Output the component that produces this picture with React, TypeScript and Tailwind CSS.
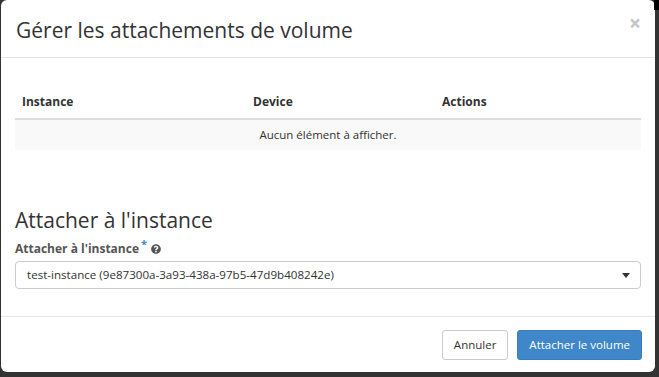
import React from "react";
import { FaQuestionCircle } from "react-icons/fa";

export default function App() {
  return (
    <div className="w-[659px] h-[377px] bg-[#333333] relative overflow-hidden" style={{ fontFamily: '"Open Sans", "Noto Sans", sans-serif' }}>
      <div className="absolute right-0 top-0 w-[5px] h-[10px] bg-black" />
      <div className="ml-[1px] w-[654px] h-[372px] bg-white rounded-[6px] flex flex-col text-[#333]">
        {/* header */}
        <div className="h-[58px] border-b border-[#e5e5e5] flex items-center justify-between pl-[15px] pr-[14px]">
          <h4 className="text-[21px] leading-[22px] text-[#333] pt-[2px]">Gérer les attachements de volume</h4>
          <span className="text-[21px] font-bold leading-none text-[#c5c5c5] -mt-[10px]">×</span>
        </div>
        {/* body */}
        <div className="px-[14px] flex-1 border-b border-[#e5e5e5]">
          <div className="mt-[28px]">
            <div className="flex h-[34px] items-center border-b-2 border-[#dddddd] text-[12px] font-bold">
              <div className="w-[231px] pl-[7px]">Instance</div>
              <div className="w-[189px] pl-[7px]">Device</div>
              <div className="pl-[7px]">Actions</div>
            </div>
            <div className="h-[30px] bg-[#f9f9f9] flex items-center justify-center text-[11.5px] text-[#333]">
              Aucun élément à afficher.
            </div>
          </div>
          <div className="mt-[59px] text-[21px] leading-[22px] text-[#333]">Attacher à l'instance</div>
          <div className="mt-[9px] flex items-center text-[12px] font-bold text-[#555] h-[17px]">
            <span>Attacher à l'instance</span>
            <span className="text-[#3f87c8] ml-[2px] -mt-[8px] text-[11px]">*</span>
            <FaQuestionCircle className="ml-[4px] text-[#555]" size={10} />
          </div>
          <div className="mt-[4px] h-[28px] border border-[#cccccc] rounded-[4px] flex items-center justify-between pl-[11px] pr-[10px] text-[11.6px] text-[#333]">
            <span>test-instance (9e87300a-3a93-438a-97b5-47d9b408242e)</span>
            <svg width="8" height="5" viewBox="0 0 8 5"><path d="M0 0 H8 L4 5 Z" fill="#333" /></svg>
          </div>
        </div>
        {/* footer */}
        <div className="h-[55px] flex items-start justify-end pr-[13px] pt-[13px] gap-[9px]">
          <button className="h-[30px] px-[11px] border border-[#cccccc] rounded-[3px] bg-white text-[11.5px] text-[#333]">Annuler</button>
          <button className="h-[30px] px-[11px] border border-[#3a7dba] rounded-[3px] bg-[#3f87c8] text-[11.5px] text-white">Attacher le volume</button>
        </div>
      </div>
    </div>
  );
}
